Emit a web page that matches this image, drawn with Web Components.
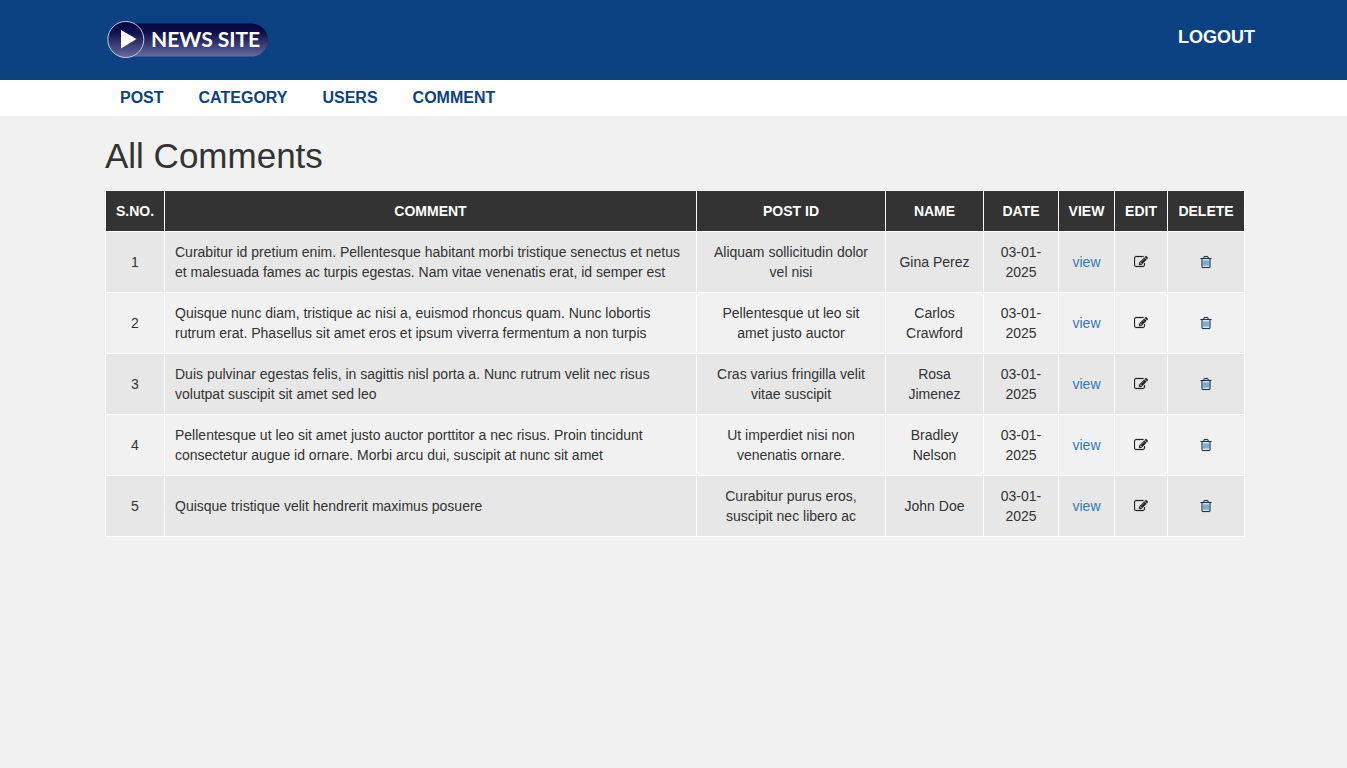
<!DOCTYPE html>
<html lang="en">
<head>
<meta charset="utf-8">
<title>All Comments</title>
<style>
html, body { margin: 0; min-height: 100%; }
body { background: #f1f1f1; color: #333; font: 14px/20px "Liberation Sans", Arial, sans-serif; }
</style>
</head>
<body>
<admin-page>
  <site-header slot="header"></site-header>
  <site-nav slot="nav"></site-nav>
  <comment-table></comment-table>
</admin-page>
<script>
const define = (name, html, setup) => {
  const template = document.createElement('template');
  template.innerHTML = html;
  customElements.define(name, class extends HTMLElement {
    constructor() {
      super();
      this.attachShadow({ mode: 'open' }).append(template.content.cloneNode(true));
    }
    connectedCallback() {
      if (setup) setup.call(this, this.shadowRoot);
    }
  });
};

define('page-container', `
<style>
:host { display: block; box-sizing: border-box; max-width: 1170px; margin: 0 auto; padding: 0 15px; }
</style><slot></slot>`);

define('admin-page', `
<style>
:host { display: block; --gutter: 3px; }
main { padding: 20px 0 20px var(--gutter); }
h1 { margin: 0 0 15px; font-size: 35px; line-height: 39px; font-weight: 400; }
</style>
<slot name="header"></slot>
<slot name="nav"></slot>
<main><page-container><h1>All Comments</h1><slot></slot></page-container></main>`);

define('site-logo', `
<style>
:host { display: block; }
svg { display: block; }
text { font: 700 21px Lato, "Liberation Sans", sans-serif; fill: #fff; }
</style>
<svg width="164" height="40" viewBox="0 0 164 40" role="img" aria-label="News Site">
  <defs><linearGradient id="g" x1="0" y1="0" x2="0" y2="1">
    <stop offset="0" stop-color="#020240"/><stop offset=".3" stop-color="#10104e"/><stop offset="1" stop-color="#666ba0"/>
  </linearGradient></defs>
  <rect x="12" y="3.5" width="151" height="33" rx="16.5" fill="url(#g)"/>
  <circle cx="20.8" cy="19.5" r="18" fill="url(#g)" stroke="#c5cbe0" stroke-width="1"/>
  <path d="M16 10 31.5 19 16 28.5Z" fill="#fff"/>
  <text x="46" y="27">NEWS SITE</text>
</svg>`);

define('site-header', `
<style>
:host { display: block; background: #0d4282; padding-left: var(--gutter, 3px); }
.bar { display: flex; align-items: center; justify-content: space-between; height: 80px; }
a { color: #fff; text-decoration: none; }
.logout { font-size: 18px; line-height: 20px; font-weight: 700; margin: 0 -10px 6px 0; }
</style>
<page-container><header class="bar">
  <a href="#" aria-label="News Site"><site-logo></site-logo></a>
  <a class="logout" href="#">LOGOUT</a>
</header></page-container>`);

define('site-nav', `
<style>
:host { display: block; background: #fff; padding-left: var(--gutter, 3px); }
ul { display: flex; gap: 5px; margin: 0; padding: 0; list-style: none; }
a { display: block; padding: 8px 15px; color: #0d4282; font-size: 16px; line-height: 20px; font-weight: 700; text-decoration: none; }
</style>
<page-container><nav><ul>
  <li><a href="#">POST</a></li><li><a href="#">CATEGORY</a></li><li><a href="#">USERS</a></li><li><a href="#">COMMENT</a></li>
</ul></nav></page-container>`);

const icons = {
  edit: 'M888 1184l116-116-152-152-116 116v56h96v96h56zm440-720q-16-16-33 1l-350 350q-17 17-1 33t33-1l350-350q17-17 1-33zm80 594v190q0 119-84.5 203.5t-203.5 84.5h-832q-119 0-203.5-84.5t-84.5-203.5v-832q0-119 84.5-203.5t203.5-84.5h832q63 0 117 25 15 7 18 23 3 17-9 29l-49 49q-14 14-32 8-23-6-45-6h-832q-66 0-113 47t-47 113v832q0 66 47 113t113 47h832q66 0 113-47t47-113v-126q0-13 9-22l64-64q15-15 35-7t20 29zm-96-738l288 288-672 672h-288v-288zm444 132l-92 92-288-288 92-92q28-28 68-28t68 28l152 152q28 28 28 68t-28 68z',
  trash: 'M704 736v576q0 14-9 23t-23 9h-64q-14 0-23-9t-9-23v-576q0-14 9-23t23-9h64q14 0 23 9t9 23zm256 0v576q0 14-9 23t-23 9h-64q-14 0-23-9t-9-23v-576q0-14 9-23t23-9h64q14 0 23 9t9 23zm256 0v576q0 14-9 23t-23 9h-64q-14 0-23-9t-9-23v-576q0-14 9-23t23-9h64q14 0 23 9t9 23zm128 724v-948h-896v948q0 22 7 40.5t14.5 27 10.5 8.5h832q3 0 10.5-8.5t14.5-27 7-40.5zm-672-1076h448l-48-117q-7-9-17-11h-317q-10 2-17 11zm928 32v64q0 14-9 23t-23 9h-96v948q0 83-47 143.5t-113 60.5h-832q-66 0-113-58.5t-47-141.5v-952h-96q-14 0-23-9t-9-23v-64q0-14 9-23t23-9h309l70-167q15-37 54-63t79-26h320q40 0 79 26t54 63l70 167h309q14 0 23 9t9 23z'
};

define('action-icon', `
<style>
:host { display: block; }
svg { display: block; width: 14px; height: 14px; margin: 0 auto; fill: currentColor; stroke: currentColor; stroke-width: 30px; }
:host([name="trash"]) path:first-of-type { fill: #3d83bd; }
</style>
<svg viewBox="0 0 1792 1792" aria-hidden="true"><path/></svg>`, function (root) {
  const path = root.querySelector('path');
  const d = icons[this.getAttribute('name')];
  path.setAttribute('d', d);
  if (this.getAttribute('name') === 'trash') {
    // The three bars come first in the outline and carry the link colour.
    const cut = d.indexOf('zm128 724') + 1;
    path.setAttribute('d', d.slice(0, cut));
    path.setAttribute('stroke', '#3d83bd');
    const can = path.cloneNode();
    can.setAttribute('d', 'M1216 736' + d.slice(cut));
    path.after(can);
  }
});

const comments = [
  ['Curabitur id pretium enim. Pellentesque habitant morbi tristique senectus et netus et malesuada fames ac turpis egestas. Nam vitae venenatis erat, id semper est', 'Aliquam sollicitudin dolor vel nisi', 'Gina Perez'],
  ['Quisque nunc diam, tristique ac nisi a, euismod rhoncus quam. Nunc lobortis rutrum erat. Phasellus sit amet eros et ipsum viverra fermentum a non turpis', 'Pellentesque ut leo sit amet justo auctor', 'Carlos Crawford'],
  ['Duis pulvinar egestas felis, in sagittis nisl porta a. Nunc rutrum velit nec risus volutpat suscipit sit amet sed leo', 'Cras varius fringilla velit vitae suscipit', 'Rosa Jimenez'],
  ['Pellentesque ut leo sit amet justo auctor porttitor a nec risus. Proin tincidunt consectetur augue id ornare. Morbi arcu dui, suscipit at nunc sit amet', 'Ut imperdiet nisi non venenatis ornare.', 'Bradley Nelson'],
  ['Quisque tristique velit hendrerit maximus posuere', 'Curabitur purus eros, suscipit nec libero ac', 'John Doe']
];

define('comment-table', `
<style>
:host { display: block; }
table { width: 100%; table-layout: fixed; border-collapse: collapse; }
th, td { border: 1px solid #fff; text-align: center; vertical-align: middle; }
th { background: #333; color: #fff; font-weight: 700; padding: 10px 0; }
td { padding: 10px; }
td.text { text-align: left; }
tbody tr:nth-child(odd) { background: #e7e7e7; }
a { color: #337ab7; text-decoration: none; }
a.icon { display: block; color: #222; }
.no { width: 59px; } .post { width: 189px; } .name { width: 98px; } .date { width: 75px; }
.view { width: 56px; } .edit { width: 53px; } .delete { width: 77px; }
</style>
<table>
  <colgroup><col class="no"><col><col class="post"><col class="name"><col class="date"><col class="view"><col class="edit"><col class="delete"></colgroup>
  <thead><tr><th>S.NO.</th><th>COMMENT</th><th>POST ID</th><th>NAME</th><th>DATE</th><th>VIEW</th><th>EDIT</th><th>DELETE</th></tr></thead>
  <tbody></tbody>
</table>`, root => {
  root.querySelector('tbody').innerHTML = comments.map(([text, post, name], i) => `<tr>
    <td>${i + 1}</td><td class="text">${text}</td><td>${post}</td><td>${name}</td><td>03-01-2025</td>
    <td><a href="#">view</a></td>
    <td><a class="icon" href="#" aria-label="Edit comment ${i + 1}"><action-icon name="edit"></action-icon></a></td>
    <td><a class="icon" href="#" aria-label="Delete comment ${i + 1}"><action-icon name="trash"></action-icon></a></td>
  </tr>`).join('');
});
</script>
</body>
</html>
